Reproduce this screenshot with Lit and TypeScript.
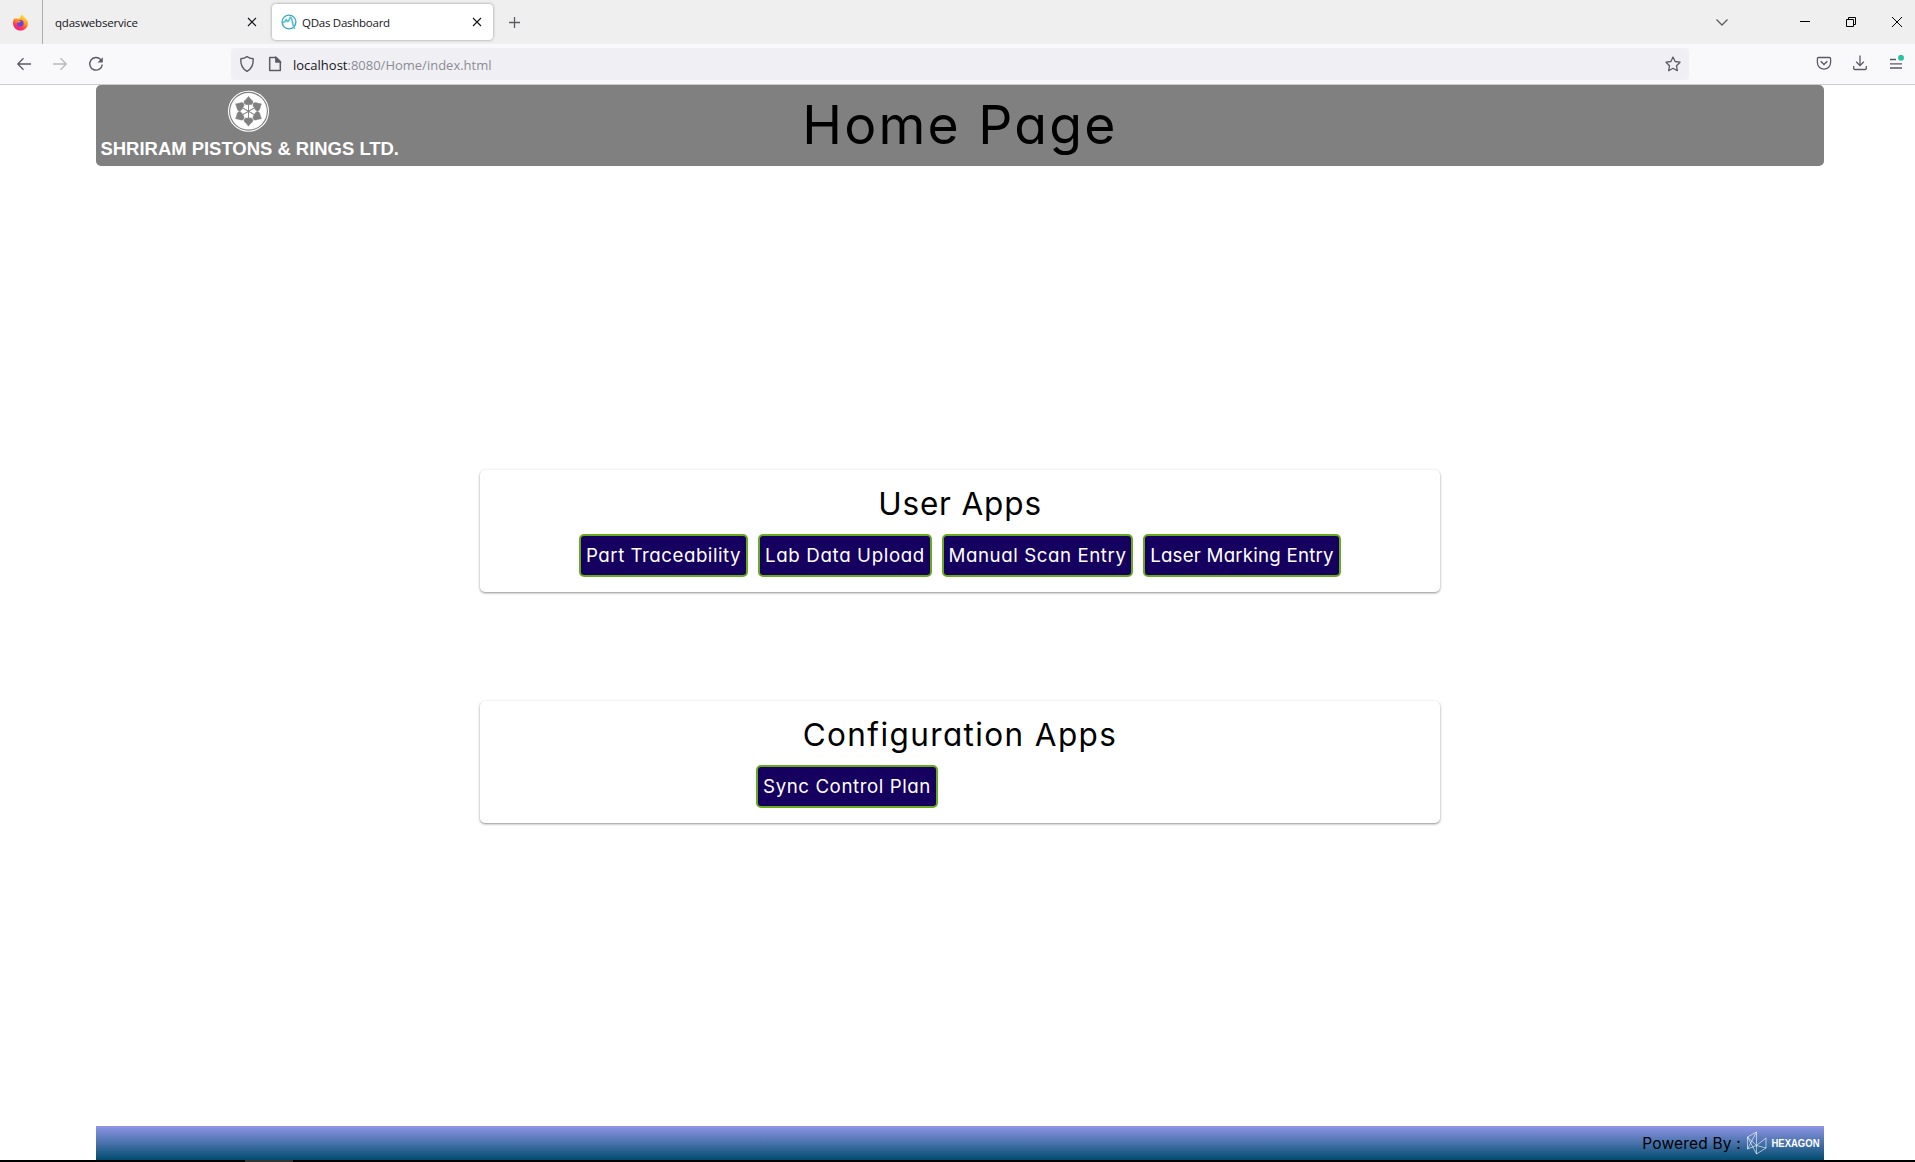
import { LitElement, html, css, svg } from "lit";
import { customElement, property } from "lit/decorators.js";
import { styleMap } from "lit/directives/style-map.js";

interface AppLink {
  label: string;
  width: number;
  spacing: number;
}

const USER_APPS: AppLink[] = [
  { label: "Part Traceability", width: 169, spacing: 0.52 },
  { label: "Lab Data Upload", width: 174, spacing: 0.64 },
  { label: "Manual Scan Entry", width: 191, spacing: 0.57 },
  { label: "Laser Marking Entry", width: 198, spacing: 0.22 },
];

const CONFIG_APPS: AppLink[] = [{ label: "Sync Control Plan", width: 182, spacing: 0.57 }];

@customElement("browser-chrome")
export class BrowserChrome extends LitElement {
  static styles = css`
    :host {
      display: block;
      font-family: "Open Sans", "Noto Sans", sans-serif;
    }
    svg {
      display: block;
      flex: none;
      fill: none;
      stroke: #5b5b66;
      stroke-width: 1.3;
    }
    .tabs {
      height: 44px;
      background: #efefef;
      display: flex;
      align-items: center;
    }
    .pinned {
      flex: none;
      width: 43px;
      height: 44px;
      box-sizing: border-box;
      padding-left: 12px;
      display: flex;
      align-items: center;
      border-right: 1px solid #aeaeae;
    }
    .tab {
      flex: none;
      display: flex;
      align-items: center;
      box-sizing: border-box;
      height: 36px;
      font-size: 11.5px;
      color: #15141a;
    }
    .tab .label {
      flex: 1;
      white-space: nowrap;
    }
    .tab .close {
      stroke: #15141a;
      stroke-width: 1.1;
    }
    .idle {
      width: 229px;
      padding: 0 15px 0 12px;
      letter-spacing: -0.2px;
    }
    .active {
      width: 221px;
      padding: 0 11px 0 9px;
      background: #fff;
      border-radius: 4px;
      box-shadow: 0 0 3px rgba(0, 0, 0, 0.4);
    }
    .active .label {
      padding-left: 5px;
      letter-spacing: -0.26px;
    }
    .plus {
      margin-left: 15px;
    }
    .spacer {
      flex: 1;
    }
    .window {
      display: flex;
      padding-right: 12px;
    }
    .window .list {
      margin-right: 70px;
    }
    .window .min,
    .window .restore {
      margin-right: 34px;
    }
    .sharp {
      stroke: #000;
      stroke-width: 1;
    }
    .nav {
      height: 40px;
      background: #f9f9fb;
      border-bottom: 1px solid #cccccf;
      display: flex;
      align-items: center;
      padding: 0 11px 0 16px;
    }
    .nav .forward {
      margin: 0 20px;
      opacity: 0.4;
    }
    .address {
      flex: none;
      margin-left: 127px;
      width: 1458px;
      height: 32px;
      box-sizing: border-box;
      padding: 0 8px;
      display: flex;
      align-items: center;
      gap: 13px;
      background: #f0f0f4;
      border-radius: 4px;
    }
    .url {
      flex: 1;
      font-size: 13px;
      line-height: 18px;
      color: #15141a;
      padding-top: 2px;
      margin-left: -2px;
      white-space: nowrap;
    }
    .url .path {
      color: #8c8c94;
    }
    .actions {
      flex: 1;
      display: flex;
      justify-content: flex-end;
      gap: 20px;
    }
  `;

  private cross() {
    return html`<svg class="close" width="10" height="10" viewBox="0 0 10 10">
      <path d="M1 1l8 8M9 1l-8 8" />
    </svg>`;
  }

  render() {
    return html`
      <div class="tabs">
        <div class="pinned">
          <svg width="17" height="17" viewBox="0 0 17 17">
            <defs>
              <linearGradient id="flame" x1="0.8" y1="0" x2="0.3" y2="1">
                <stop offset="0" stop-color="#fff04a" />
                <stop offset="0.45" stop-color="#ff9a20" />
                <stop offset="0.75" stop-color="#ff3b50" />
                <stop offset="1" stop-color="#f0158c" />
              </linearGradient>
            </defs>
            <path
              stroke="none"
              fill="url(#flame)"
              d="M9.8.6c1.8 1 2.7 2.300 2.900 3.300 1.300.4 3.300 2.300 3.300 5.300 0 4.200-3.400 7.300-7.500 7.300S1 13.300 1 9.200c0-2.300.6-4 1.600-5.200l.5 1.300 1.300-1.600.5 1.300c1.200-.6 2-.5 2.800-.3.300-1.600 1-3 2.100-4.100z"
            />
            <circle stroke="none" cx="8.300" cy="9.400" r="3.300" fill="#6f3fe0" />
            <path stroke="none" fill="#ff8a22" d="M4.300 6.500c1.600-.7 3.500-.2 4.800.9-.9.900-2.300.5-2.900 1.500-.8-.4-1.700-1.200-1.900-2.400z" />
          </svg>
        </div>
        <div class="tab idle"><span class="label">qdaswebservice</span>${this.cross()}</div>
        <div class="tab active">
          <svg width="16" height="16" viewBox="0 0 16 16">
            <circle cx="8" cy="8" r="6.900" stroke="#3fa9c1" stroke-width="1.400" />
            <path
              d="M1.800 8.600l2-.8 1.400-2.300 1.100 2 1.400-.6 1.500-3.700c1 .2 1.500 1.600 1.900 3.400.5 2.600 1 5.400 2.600 8.200"
              stroke="#5cc3d8"
              stroke-width="1.700"
              stroke-linejoin="round"
            />
          </svg>
          <span class="label">QDas Dashboard</span>${this.cross()}
        </div>
        <svg class="plus" width="13" height="13" viewBox="0 0 13 13"><path d="M6.500 1v11M1 6.500h11" /></svg>
        <div class="spacer"></div>
        <div class="window">
          <svg class="list" width="14" height="12" viewBox="0 0 14 12"><path d="M1.500 3.500L7 9l5.500-5.500" /></svg>
          <svg class="min sharp" width="12" height="12" viewBox="0 0 12 12"><path d="M1 5.500h10" /></svg>
          <svg class="restore sharp" width="12" height="12" viewBox="0 0 12 12">
            <path d="M1.500 3.500h7v7h-7zM3.500 3.500v-2h7v7h-2" />
          </svg>
          <svg class="sharp" width="12" height="12" viewBox="0 0 12 12"><path d="M1 1l10 10M11 1L1 11" /></svg>
        </div>
      </div>
      <div class="nav">
        <svg width="16" height="14" viewBox="0 0 16 14"><path d="M15 7H2M7.500 1.300L1.800 7l5.700 5.700" /></svg>
        <svg class="forward" width="16" height="14" viewBox="0 0 16 14">
          <path d="M1 7h13M8.500 1.300L14.200 7l-5.700 5.700" />
        </svg>
        <svg width="16" height="16" viewBox="0 0 16 16">
          <path d="M12.800 3.700A6.300 6.300 0 1 0 14.300 8.500" stroke-width="1.400" />
          <path d="M14.800 1.200v5.200h-5.200z" fill="#5b5b66" stroke="none" />
        </svg>
        <div class="address">
          <svg width="16" height="18" viewBox="0 0 16 18">
            <path
              d="M8 1.600c1.800 1.300 3.800 2 6.200 2.200.3 5-1.300 9.800-6.200 12.600C3.100 13.600 1.500 8.800 1.800 3.800 4.200 3.600 6.200 2.900 8 1.600z"
              stroke-width="1.400"
              stroke-linejoin="round"
            />
          </svg>
          <svg width="14" height="16" viewBox="0 0 14 16">
            <path d="M1.700 1.500h6.600l4 4.100v8.800H1.700z" stroke-width="1.500" stroke-linejoin="round" />
            <path d="M7.800 1.500v4.500h4.500z" fill="#5b5b66" />
          </svg>
          <span class="url">localhost<span class="path">:8080/Home/index.html</span></span>
          <svg width="16" height="16" viewBox="0 0 16 16">
            <path
              d="M8 1l2.100 4.500 4.900.7-3.500 3.500.8 5L8 12.300l-4.300 2.400.8-5L1 6.200l4.900-.7z"
              stroke-linejoin="round"
            />
          </svg>
        </div>
        <div class="actions">
          <svg width="16" height="16" viewBox="0 0 16 16">
            <path d="M2.600 2.500h10.800q1.200 0 1.200 1.200V7.500a6.600 6.600 0 0 1-13.200 0V3.700q0-1.200 1.200-1.200z" />
            <path d="M4.700 6.300L8 9.500l3.300-3.200" stroke-width="1.500" />
          </svg>
          <svg width="16" height="16" viewBox="0 0 16 16">
            <path d="M8 .5v10M4.200 6.800L8 10.600l3.800-3.800M1.700 11v2.300q0 1.200 1.200 1.200h10.200q1.200 0 1.200-1.200V11" />
          </svg>
          <svg width="16" height="18" viewBox="0 0 16 18">
            <path d="M2 4.500h6M2 8.800h12M2 13h12" />
            <circle cx="13" cy="2.800" r="3" fill="#2ac3a2" stroke="none" />
          </svg>
        </div>
      </div>
    `;
  }
}

@customElement("app-card")
export class AppCard extends LitElement {
  @property() heading = "";
  @property({ type: Number }) tracking = 0;
  @property({ attribute: false }) links: AppLink[] = [];

  static styles = css`
    :host {
      display: block;
      width: 960px;
      height: 122px;
      box-sizing: border-box;
      padding-top: 14px;
      border-radius: 5px;
      background: #fff;
      box-shadow: 0 1px 3px rgba(0, 0, 0, 0.26), 0 1px 2px rgba(0, 0, 0, 0.22);
    }
    h2 {
      margin: 0;
      font-size: 31.500px;
      font-weight: 400;
      line-height: 40px;
      text-align: center;
    }
    .row {
      display: flex;
      justify-content: center;
      gap: 10px;
      margin-top: 10px;
    }
    :host([offset]) .row {
      justify-content: flex-start;
      padding-left: 276px;
    }
    button {
      height: 43px;
      padding: 0 0 1px;
      border: 2px solid #6aaa1e;
      border-radius: 5px;
      background: #150060;
      color: #fff;
      font: inherit;
      font-size: 18.700px;
      white-space: nowrap;
    }
  `;

  render() {
    return html`
      <h2 style=${styleMap({ letterSpacing: `${this.tracking}px` })}>${this.heading}</h2>
      <div class="row">
        ${this.links.map(
          (l) => html`<button style=${styleMap({ width: `${l.width}px`, letterSpacing: `${l.spacing}px` })}>${l.label}</button>`
        )}
      </div>
    `;
  }
}

@customElement("app-root")
export class AppRoot extends LitElement {
  static styles = css`
    :host {
      display: flex;
      flex-direction: column;
      height: 1162px;
      background: #fff;
      color: #000;
      font-family: Inter, "Open Sans", sans-serif;
      font-feature-settings: "cv11";
      overflow: hidden;
    }
    header {
      width: 1728px;
      height: 81px;
      margin-left: 96px;
      background: #808080;
      border-radius: 5px;
      display: grid;
      grid-template-columns: 1fr auto 1fr;
      align-items: center;
    }
    header svg {
      display: block;
      padding-left: 4px;
    }
    h1 {
      margin: 0;
      padding-bottom: 2px;
      font-size: 53.500px;
      font-weight: 400;
      line-height: 78px;
      letter-spacing: 2.200px;
    }
    .company {
      font: bold 18.700px "Liberation Sans", Arial, sans-serif;
      fill: #fff;
    }
    main {
      flex: 1;
      display: flex;
      flex-direction: column;
      padding: 304px 0 0 480px;
      gap: 109px;
    }
    footer {
      width: 1728px;
      height: 34px;
      box-sizing: border-box;
      margin-left: 96px;
      padding-right: 1px;
      display: flex;
      align-items: center;
      justify-content: flex-end;
      background: linear-gradient(#9096e6, #004d70);
      font-size: 15.500px;
    }
    .powered {
      letter-spacing: 0.2px;
      margin-right: 5px;
    }
    .hexagon {
      font: bold 11px "Liberation Sans", Arial, sans-serif;
      fill: #fff;
    }
    .edge {
      height: 2px;
      background: #000;
      padding-left: 245px;
    }
    .edge div {
      width: 48px;
      height: 2px;
      background: #333;
    }
  `;

  private emblem() {
    return svg`
      <g transform="translate(148.500 26.300)">
        <circle r="20" fill="none" stroke="#fff" stroke-width="1.100" />
        <circle r="18.300" fill="#fff" />
        ${[0, 60, 120, 180, 240, 300].map(
          (a) => svg`<path transform="rotate(${a})" fill="#808080" stroke="#808080" stroke-width="0.700"
            d="M0 0V-7C-2.200-6.200-4.600-7.200-4.400-9.200-4.200-11.300-1.500-12 0-14.800 1.500-12 4.200-11.300 4.400-9.200 4.600-7.200 2.200-6.200 0-7Z" />`
        )}
      </g>`;
  }

  render() {
    return html`
      <browser-chrome></browser-chrome>
      <header>
        <svg width="310" height="81" viewBox="0 0 310 81">
          ${this.emblem()}
          <text class="company" x="0.500" y="69.500" textLength="298.500" lengthAdjust="spacingAndGlyphs">SHRIRAM PISTONS &amp; RINGS LTD.</text>
        </svg>
        <h1>Home Page</h1>
      </header>
      <main>
        <app-card heading="User Apps" tracking="0.85" .links=${USER_APPS}></app-card>
        <app-card offset heading="Configuration Apps" tracking="1.39" .links=${CONFIG_APPS}></app-card>
      </main>
      <footer>
        <span class="powered">Powered By :</span>
        <svg width="77" height="26" viewBox="0 0 77 26">
          <g fill="none" stroke="#fff" stroke-width="0.800" opacity="0.750">
            <path d="M1.500 7L10.500 2v13.500L1.500 19zM1.500 7L10.500 24l9.500-6V8L10.500 15.500zM10.500 15.500L20 18M10.500 15.500v8.500M1.500 19L10.500 2" />
          </g>
          <text class="hexagon" x="25.500" y="16.800" textLength="48" lengthAdjust="spacingAndGlyphs">HEXAGON</text>
        </svg>
      </footer>
      <div class="edge"><div></div></div>
    `;
  }
}
